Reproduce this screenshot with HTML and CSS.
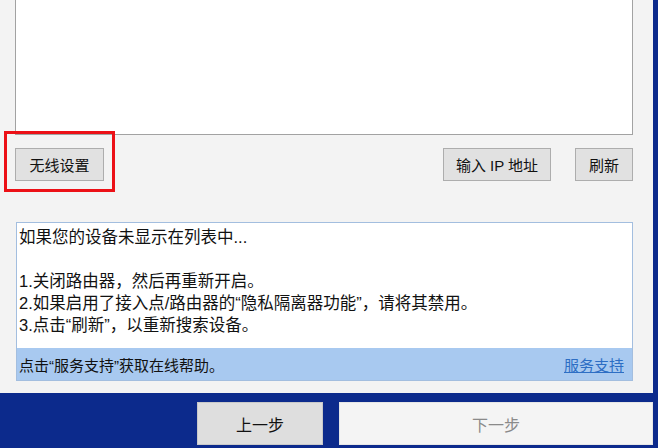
FILE: index.html
```html
<!doctype html>
<html lang="zh-CN">
  <head>
    <meta charset="utf-8">
    <meta name="viewport" content="width=device-width, initial-scale=1">
    <title>设备搜索</title>
    <link rel="stylesheet" href="styles.css">
  </head>
  <body>
    <div class="window">
      <div class="panel">
        <div class="device-list"></div>

        <div class="button-row">
          <span class="mark">
            <button class="btn btn-wide">无线设置</button>
          </span>
          <div class="button-group">
            <button class="btn btn-ip">输入 IP 地址</button>
            <button class="btn btn-small">刷新</button>
          </div>
        </div>

        <div class="info-box">
          <div class="info-text">
            <p>如果您的设备未显示在列表中...</p>
            <p>&nbsp;</p>
            <p>1.关闭路由器，然后再重新开启。</p>
            <p>2.如果启用了接入点/路由器的“隐私隔离器功能”，请将其禁用。</p>
            <p>3.点击“刷新”，以重新搜索设备。</p>
          </div>
          <div class="info-footer">
            <span>点击“服务支持”获取在线帮助。</span>
            <a href="#" class="support-link">服务支持</a>
          </div>
        </div>
      </div>

      <div class="nav">
        <button class="nav-btn nav-back">上一步</button>
        <button class="nav-btn nav-next" disabled>下一步</button>
      </div>
    </div>
  </body>
</html>
```

FILE: styles.css
```css
html, body {
  margin: 0;
  padding: 0;
}
body {
  width: 658px;
  height: 448px;
  overflow: hidden;
  background: #0c2a8c;
  font-family: "Liberation Sans", "Noto Sans CJK SC", sans-serif;
  color: #111;
}
.window {
  width: 653px;
}
.panel {
  height: 393px;
  box-sizing: border-box;
  background: #f3f3f3;
  padding: 0 20px 0 15px;
  overflow: hidden;
}
.device-list {
  margin-top: -1px;
  height: 136px;
  box-sizing: border-box;
  background: #fff;
  border: 1px solid #a2a2a2;
}
.button-row {
  margin-top: 13px;
  display: flex;
  justify-content: space-between;
}
.button-group {
  display: flex;
  gap: 24px;
}
.btn {
  height: 33px;
  box-sizing: border-box;
  background: #e1e1e1;
  border: 1px solid #adadad;
  font-family: inherit;
  font-size: 15px;
  color: #111;
  padding: 0;
}
.btn-wide {
  width: 89px;
}
.btn-ip {
  width: 108px;
}
.btn-small {
  width: 58px;
}
.mark {
  position: relative;
  display: flex;
}
.mark::after {
  content: "";
  position: absolute;
  left: -11px;
  top: -17px;
  width: 111px;
  height: 61px;
  box-sizing: border-box;
  border: 3px solid #ec1016;
}
.info-box {
  margin-top: 41px;
  margin-left: 1px;
  border: 1px solid #a3bedf;
  background: #fff;
}
.info-text {
  height: 125px;
  box-sizing: border-box;
  padding: 3px 2px 0;
  font-size: 16.5px;
  line-height: 22px;
}
.info-text p {
  margin: 0;
}
.info-footer {
  height: 32px;
  background: #a8c9f0;
  display: flex;
  align-items: center;
  justify-content: space-between;
  padding: 0 8px 0 2px;
  font-size: 15px;
}
.support-link {
  color: #2d6ec4;
  text-decoration: underline;
}
.nav {
  display: flex;
  justify-content: flex-end;
  gap: 16px;
  padding-top: 9px;
}
.nav-btn {
  height: 43px;
  box-sizing: border-box;
  font-family: inherit;
  font-size: 16px;
  padding: 0;
}
.nav-back {
  width: 126px;
  background: #dedede;
  border: 1px solid #c9c9c9;
  color: #111;
}
.nav-next {
  width: 314px;
  background: #f4f4f4;
  border: 1px solid #e6e6e6;
  color: #8a8a8a;
}
```
